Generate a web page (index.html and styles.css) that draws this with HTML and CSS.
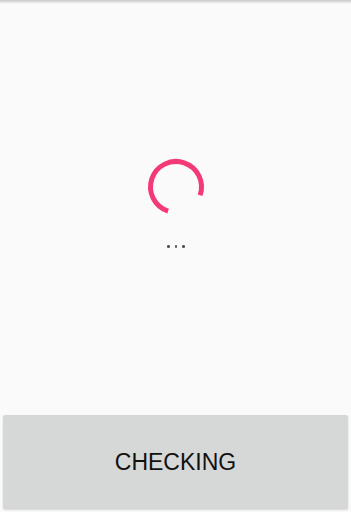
FILE: index.html
```html
<!DOCTYPE html>
<html lang="en">

<head>
    <meta charset="UTF-8">
    <meta name="viewport" content="width=device-width, initial-scale=1.0">
    <title>Checking</title>
    <link rel="stylesheet" href="styles.css">
</head>

<body>
    <div class="screen">
        <div class="topbar"></div>

        <!-- Loading -->
        <div class="loading">
            <svg class="spinner" width="62" height="62" viewBox="0 0 62 62">
                <path d="M 55.1 39.3 A 25.5 25.5 0 1 0 23.1 55.2" fill="none" stroke="#f43a76" stroke-width="5"/>
            </svg>
            <div class="dots">
                <span class="dot"></span>
                <span class="dot"></span>
                <span class="dot"></span>
            </div>
        </div>

        <div class="footer">
            <button class="check-button">CHECKING</button>
        </div>
    </div>
</body>

</html>
```

FILE: styles.css
```css
body {
    margin: 0;
    padding: 0;
    background: #fafafa;
    font-family: Roboto, 'Noto Sans', sans-serif;
}

.screen {
    width: 351px;
    height: 512px;
    display: flex;
    flex-direction: column;
    overflow: hidden;
}

.topbar {
    height: 4px;
    background: linear-gradient(#c9c9c9, #fafafa);
}

.loading {
    flex: 1;
    display: flex;
    flex-direction: column;
    align-items: center;
    padding-top: 152px;
}

.spinner {
    display: block;
}

.dots {
    display: flex;
    gap: 5px;
    margin-top: 27px;
    margin-left: 1px;
}

.dot {
    width: 2.5px;
    height: 2.5px;
    border-radius: 50%;
    background: #555;
}

.footer {
    padding: 0 3px 3px 3px;
}

.check-button {
    width: 100%;
    height: 94px;
    background: #d6d7d7;
    border: none;
    border-radius: 2px;
    box-shadow: 0 1px 2px rgba(0, 0, 0, 0.15);
    color: #111;
    font-family: 'Liberation Sans', Arial, sans-serif;
    font-size: 23px;
    padding: 0;
    cursor: pointer;
}
```
